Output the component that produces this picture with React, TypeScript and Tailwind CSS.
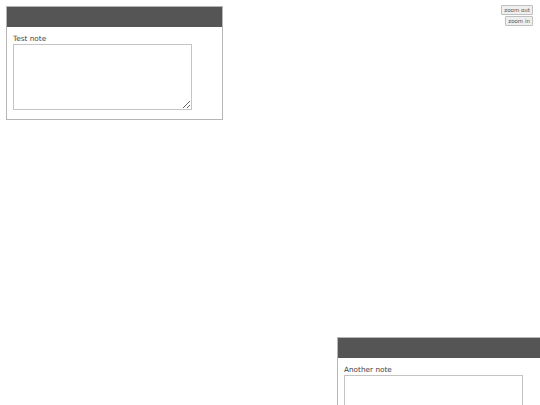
import React from "react";

type Note = { id: string; title: string; x: number; y: number };

const notes: Note[] = [
  { id: "a", title: "Test note", x: 6, y: 6 },
  { id: "b", title: "Another note", x: 337, y: 337 },
];

function NoteCard({ note }: { note: Note }) {
  return (
    <div
      className="absolute w-[217px] border border-[#b5b5b5] bg-white"
      style={{ left: note.x, top: note.y }}
    >
      <div className="h-[20px] bg-[#555555]" />
      <div className="px-[6px] pb-[9px] pt-[7px]">
        <label className="block text-[7.3px] leading-[10px] text-[#444]">{note.title}</label>
        <textarea className="block h-[66px] w-[179px] resize border border-[#c4c4c4] bg-white p-0 outline-none" />
      </div>
    </div>
  );
}

export default function App() {
  return (
    <div className="relative h-[405px] w-[540px] overflow-hidden bg-white font-['DejaVu_Sans',sans-serif]">
      {notes.map((n) => (
        <NoteCard key={n.id} note={n} />
      ))}
      <div className="absolute right-[7px] top-[5px] flex flex-col items-end gap-[1px]">
        <button className="h-[10px] rounded-[1px] border border-[#c0c0c0] bg-[#efefef] px-[2px] text-[5.5px] leading-[8px] text-[#555]">
          zoom out
        </button>
        <button className="h-[10px] rounded-[1px] border border-[#c0c0c0] bg-[#efefef] px-[2px] text-[5.5px] leading-[8px] text-[#555]">
          zoom in
        </button>
      </div>
    </div>
  );
}
